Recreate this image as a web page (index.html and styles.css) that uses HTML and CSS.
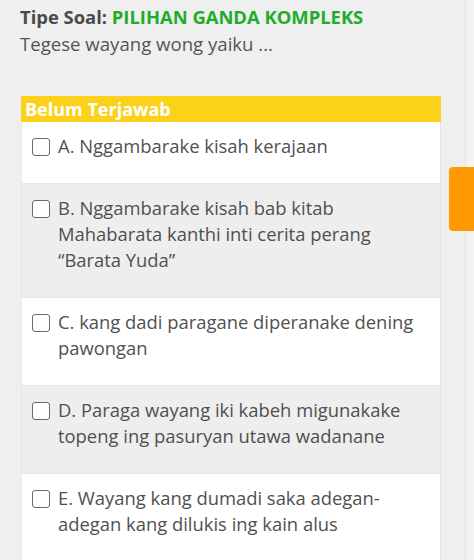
FILE: index.html
```html
<!DOCTYPE html>
<html lang="jv">
<head>
<meta charset="utf-8">
<link rel="stylesheet" href="styles.css">
</head>
<body>
<div class="page">
  <div class="head">
    <div class="type"><span class="type-label">Tipe Soal:</span> <span class="type-value">PILIHAN GANDA KOMPLEKS</span></div>
    <div class="question">Tegese wayang wong yaiku ...</div>
  </div>
  <div class="card">
    <div class="status">Belum Terjawab</div>
    <div class="option">
      <span class="box"></span>
      <span class="label">A. Nggambarake kisah kerajaan</span>
    </div>
    <div class="option alt">
      <span class="box"></span>
      <span class="label">B. Nggambarake kisah bab kitab Mahabarata kanthi inti cerita perang “Barata Yuda”</span>
    </div>
    <div class="option">
      <span class="box"></span>
      <span class="label">C. kang dadi paragane diperanake dening pawongan</span>
    </div>
    <div class="option alt">
      <span class="box"></span>
      <span class="label">D. Paraga wayang iki kabeh migunakake topeng ing pasuryan utawa wadanane</span>
    </div>
    <div class="option">
      <span class="box"></span>
      <span class="label">E. Wayang kang dumadi saka adegan-adegan kang dilukis ing kain alus</span>
    </div>
  </div>
</div>
<div class="side-tab"></div>
</body>
</html>
```

FILE: styles.css
```css
html, body {
  margin: 0;
  padding: 0;
  background: #f3f3f3;
  font-family: "Open Sans", "Liberation Sans", sans-serif;
}
body {
  width: 474px;
  height: 560px;
  overflow: hidden;
  position: relative;
}
.page {
  width: 465px;
  height: 560px;
  background: #efefef;
  border-right: 1px solid #e3e3e3;
  box-sizing: content-box;
}
.head {
  padding: 3px 0 0 20px;
  height: 96px;
  box-sizing: border-box;
}
.type {
  font-size: 18.4px;
  line-height: 27px;
  font-weight: 700;
}
.type-label { color: #4a4a4a; }
.type-value { color: #1eac2b; }
.question {
  font-size: 18.6px;
  line-height: 27px;
  color: #555555;
}
.card {
  margin-left: 21px;
  width: 420px;
  border-left: 1px solid #e6e6e6;
  border-right: 1px solid #e6e6e6;
  box-sizing: border-box;
}
.status {
  background: #fcd11a;
  color: #ffffff;
  font-weight: 700;
  font-size: 18px;
  line-height: 26px;
  padding-left: 4px;
  margin: 0 -1px;
}
.option {
  display: flex;
  align-items: flex-start;
  gap: 8px;
  padding: 11px 20px 24px 10px;
  background: #ffffff;
  border-bottom: 1px solid #e8e8e8;
  font-size: 18.4px;
  line-height: 26px;
  color: #505050;
}
.option.alt {
  background: #eeeeee;
}
.box {
  flex: none;
  width: 18px;
  height: 18px;
  margin-top: 5px;
  box-sizing: border-box;
  border: 1.5px solid #6a6a6a;
  border-radius: 3px;
  background: #ffffff;
}
.label {
  flex: 1;
}
.side-tab {
  position: absolute;
  left: 449px;
  top: 167px;
  width: 30px;
  height: 64px;
  background: #ff9a05;
  border-radius: 4px;
}
```
